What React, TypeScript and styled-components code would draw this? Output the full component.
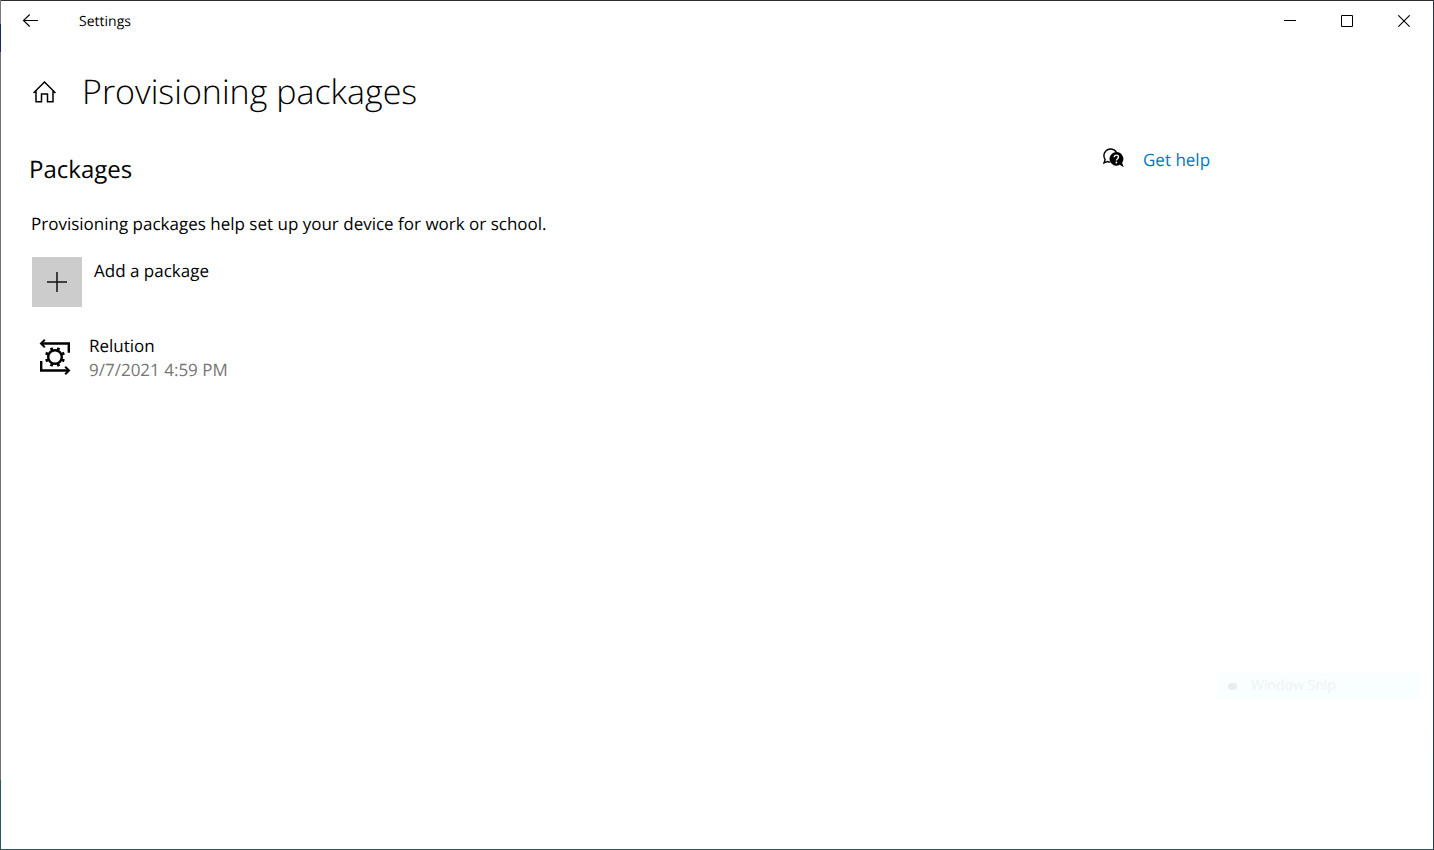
import React from "react";
import styled, { createGlobalStyle } from "styled-components";

const GlobalStyle = createGlobalStyle`
  *, *::before, *::after { box-sizing: border-box; }
  body { margin: 0; background: #fff; text-rendering: geometricPrecision; }
  h1, h2, p, ul { margin: 0; padding: 0; }
  button { font: inherit; color: inherit; background: none; border: 0; padding: 0; cursor: pointer; text-rendering: inherit; }
  svg { display: block; flex: none; }
`;

const Frame = styled.div`
  position: relative;
  display: flex;
  min-height: 100vh;
  padding: 1px;
  background: linear-gradient(#77777b 0 24px, #1d2b5c 24px 52px, #6f7074 52px calc(100% - 70px), #2c5560 calc(100% - 70px)) left / 1px 100% no-repeat,
    linear-gradient(#24344f, #1f3a4e) right / 1px 100% no-repeat,
    linear-gradient(#2e2e33, #2e2e33) top / 100% 1px no-repeat,
    linear-gradient(#2c5560, #2c5560) bottom / 100% 1px no-repeat,
    #fff;
  color: #000;
  font-family: "Segoe UI", "Open Sans", "Noto Sans", sans-serif;
  font-size: 17px;
  line-height: 24px;
`;

const Window = styled.div`
  flex: 1;
  display: flex;
  flex-direction: column;
  min-width: 0;
`;

const TitleBar = styled.header`
  display: flex;
  align-items: center;
  height: 40px;
  padding-right: 1px;
`;

const BackButton = styled.button`
  display: grid;
  place-items: center;
  width: 58px;
  height: 40px;
`;

const WindowTitle = styled.span`
  flex: 1;
  padding: 2px 0 0 20px;
  font-size: 14px;
`;

const CaptionButton = styled.button`
  display: grid;
  place-items: center;
  width: 57px;
  height: 40px;
`;

const PageHeader = styled.div`
  display: flex;
  align-items: center;
  gap: 25px;
  padding: 25px 30px 0;
`;

const HomeButton = styled.button`
  display: block;
`;

const PageTitle = styled.h1`
  font-size: 34px;
  font-weight: 350;
  line-height: 50px;
`;

const Body = styled.div`
  display: grid;
  grid-template-columns: minmax(0, 1fr) 330px;
  padding-top: 34px;
`;

const Packages = styled.main`
  padding-left: 28px;
`;

const SectionTitle = styled.h2`
  font-size: 24px;
  font-weight: 400;
  line-height: 40px;
`;

const Description = styled.p`
  padding: 22px 0 0 2px;
`;

const AddButton = styled.button`
  display: flex;
  gap: 12px;
  margin: 21px 0 0 3px;
  text-align: left;
`;

const AddTile = styled.span`
  display: grid;
  place-items: center;
  width: 50px;
  height: 50px;
  background: #ccc;
`;

const AddLabel = styled.span`
  padding-top: 2px;
`;

const PackageList = styled.ul`
  padding: 27px 0 0 9px;
  list-style: none;
`;

const PackageItem = styled.li`
  display: flex;
  gap: 17px;
`;

const PackageIcon = styled.span`
  padding-top: 4px;
`;

const PackageDate = styled.p`
  color: #767676;
`;

const HelpLink = styled.a`
  display: flex;
  gap: 19px;
  margin-top: -2px;
  color: #0078c0;
  text-decoration: none;
`;

const FadingNotice = styled.div`
  position: absolute;
  right: 16px;
  bottom: 152px;
  display: flex;
  align-items: center;
  gap: 14px;
  width: 198px;
  height: 24px;
  padding-left: 8px;
  background: #f9feff;
  box-shadow: 0 0 6px 2px #fafeff;
  color: #eef3f4;
  font-size: 14px;
`;

const NoticeDot = styled.span`
  width: 9px;
  height: 7px;
  border-radius: 4px;
  background: #e9edef;
`;

const BackIcon = () => (
  <svg width="16" height="14" viewBox="0 0 16 14" fill="none" stroke="#000" strokeWidth="1.1">
    <path d="M16 6.500H1.500M7.700 .500 1.500 6.500l6.200 6" />
  </svg>
);

const MinimizeIcon = () => (
  <svg width="12" height="12" viewBox="0 0 12 12">
    <path d="M0 5h12v1H0z" />
  </svg>
);

const MaximizeIcon = () => (
  <svg width="12" height="12" viewBox="0 0 12 12" fill="none" stroke="#000">
    <path d="M.5 .5h11v11H.5z" />
  </svg>
);

const CloseIcon = () => (
  <svg width="12" height="12" viewBox="0 0 12 12" fill="none" stroke="#000" strokeWidth="1.1">
    <path d="M.3 .3l11.4 11.4M11.7 .3.3 11.7" />
  </svg>
);

const HomeIcon = () => (
  <svg width="26" height="24" viewBox="0 0 26 24" fill="none" stroke="#000" strokeWidth="1.5">
    <path d="M2.500 14 13.500 3 24.500 14M5 11.800v10.900h5.500v-7.700h6v7.700H22V11.800" />
  </svg>
);

const PlusIcon = () => (
  <svg width="20" height="20" viewBox="0 0 20 20" fill="none" stroke="#111" strokeWidth="1.5">
    <path d="M0 10h20M10 0v20" />
  </svg>
);

const teeth = [22.5, 67.5, 112.5, 157.5, 202.5, 247.5, 292.5, 337.5];

const ProvisioningIcon = () => (
  <svg width="34" height="38" viewBox="0 0 34 38" fill="none" stroke="#000">
    <path strokeWidth="2.4" d="M3 5.5h27.8v9.2M3.2 23v9.5H31" />
    <path strokeWidth="2" d="M6.8 1.8 3 5.5l3.8 3.7M27.2 28.8l3.8 3.7-3.8 3.7" />
    <circle cx="17" cy="19" r="6.8" strokeWidth="2.4" />
    {teeth.map((angle) => (
      <path key={angle} strokeWidth="2.8" d="M17 12.4V8.900" transform={`rotate(${angle} 17 19)`} />
    ))}
  </svg>
);

const HelpIcon = () => (
  <svg width="21" height="20" viewBox="0 0 21 20">
    <path
      d="M7.2 14.1c-1.1 0-2-.2-2.8-.6L1 14.8l1.2-3.2A6.3 6.3 0 0 1 .9 7.6C.9 4 3.8 1 7.5 1c2.600 0 4.800 1.300 5.900 3.300"
      fill="none"
      stroke="#000"
      strokeWidth="1.4"
    />
    <path d="M13.300 4.100a6.800 6.800 0 1 0 3.400 12.700L20.700 19.200 19.100 14.800A6.800 6.800 0 0 0 13.300 4.100Z" />
    <path d="M11.200 9.200c0-1.300.9-2.100 2.200-2.100s2.100.8 2.100 1.900c0 1.700-2.100 1.700-2.100 3.500" fill="none" stroke="#fff" strokeWidth="1.400" />
    <circle cx="13.400" cy="14.500" r=".9" fill="#fff" />
  </svg>
);

export default function App() {
  return (
    <>
      <GlobalStyle />
      <Frame>
        <Window>
          <TitleBar>
            <BackButton aria-label="Back"><BackIcon /></BackButton>
            <WindowTitle>Settings</WindowTitle>
            <CaptionButton aria-label="Minimize"><MinimizeIcon /></CaptionButton>
            <CaptionButton aria-label="Maximize"><MaximizeIcon /></CaptionButton>
            <CaptionButton aria-label="Close"><CloseIcon /></CaptionButton>
          </TitleBar>
          <PageHeader>
            <HomeButton aria-label="Home"><HomeIcon /></HomeButton>
            <PageTitle>Provisioning packages</PageTitle>
          </PageHeader>
          <Body>
            <Packages>
              <SectionTitle>Packages</SectionTitle>
              <Description>Provisioning packages help set up your device for work or school.</Description>
              <AddButton>
                <AddTile><PlusIcon /></AddTile>
                <AddLabel>Add a package</AddLabel>
              </AddButton>
              <PackageList>
                <PackageItem>
                  <PackageIcon><ProvisioningIcon /></PackageIcon>
                  <div>
                    <p>Relution</p>
                    <PackageDate>9/7/2021 4:59 PM</PackageDate>
                  </div>
                </PackageItem>
              </PackageList>
            </Packages>
            <aside>
              <HelpLink href="#help">
                <HelpIcon />
                Get help
              </HelpLink>
            </aside>
          </Body>
        </Window>
        <FadingNotice aria-hidden="true">
          <NoticeDot />
          Window Snip
        </FadingNotice>
      </Frame>
    </>
  );
}
